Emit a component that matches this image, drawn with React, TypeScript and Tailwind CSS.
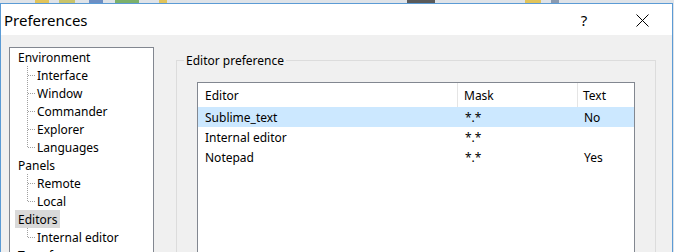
const tree = [
  { label: 'Environment', children: ['Interface', 'Window', 'Commander', 'Explorer', 'Languages'] },
  { label: 'Panels', children: ['Remote', 'Local'] },
  { label: 'Editors', selected: true, children: ['Internal editor'] },
  { label: 'Transfer', children: [] },
]

const editors = [
  { name: 'Sublime_text', mask: '*.*', text: 'No', selected: true },
  { name: 'Internal editor', mask: '*.*', text: '' },
  { name: 'Notepad', mask: '*.*', text: 'Yes' },
]

function Connector({ last }: { last: boolean }) {
  return (
    <svg width="10" height="18" className="shrink-0">
      <line x1="0.5" y1="0" x2="0.5" y2={last ? 9 : 18} stroke="#a0a0a0" strokeDasharray="1 1" />
      <line x1="1" y1="9.5" x2="8" y2="9.5" stroke="#a0a0a0" strokeDasharray="1 1" />
    </svg>
  )
}

export default function App() {
  return (
    <div className="w-[674px] h-[252px] overflow-hidden flex flex-col bg-[#dfe3e8] font-['Noto_Sans',sans-serif] text-[12px] text-black">
      {/* background app toolbar peeking above */}
      <div className="h-[3px] flex shrink-0">
        <span className="ml-[35px] w-[14px] bg-[#e2c45a]" />
        <span className="ml-[10px] w-[16px] bg-[#c9c46a]" />
        <span className="ml-[14px] w-[14px] bg-[#6c8fc4]" />
        <span className="ml-[12px] w-[24px] bg-[#7cb06a]" />
        <span className="ml-[20px] w-[8px] bg-[#e2c45a]" />
        <span className="ml-[240px] w-[28px] bg-[#5a5a5a]" />
        <span className="ml-[90px] w-[16px] bg-[#e2c45a]" />
        <span className="ml-[10px] w-[8px] bg-[#8a9ab0]" />
      </div>

      <div className="flex-1 min-h-0 w-[673px] flex flex-col border-t border-x border-[#5b9bd5] bg-[#f0f0f0]">
        {/* title bar */}
        <div className="h-[31px] shrink-0 bg-white flex items-center pt-[1px]">
          <span className="pl-[3px] text-[15px] leading-none">Preferences</span>
          <span className="ml-auto w-[8px] text-center text-[15px] leading-none">?</span>
          <svg width="13" height="13" className="ml-[48px] mr-[23px]" viewBox="0 0 13 13">
            <path d="M0.5 0.5 L12.5 12.5 M12.5 0.5 L0.5 12.5" stroke="#000" strokeWidth="1" fill="none" />
          </svg>
        </div>

        {/* body */}
        <div className="flex-1 min-h-0 flex">
          <div className="ml-[8px] mt-[12px] w-[145px] h-[220px] shrink-0 border border-[#828790] bg-white">
            {tree.map((node) => (
              <div key={node.label}>
                <div className="h-[18px] flex">
                  <span className={`ml-[5px] px-[3px] h-[18px] pt-[2px] leading-[16px] ${node.selected ? 'bg-[#d9d9d9]' : ''}`}>
                    {node.label}
                  </span>
                </div>
                {node.children.map((child, i) => (
                  <div key={child} className="h-[18px] flex pl-[17px]">
                    <Connector last={i === node.children.length - 1} />
                    <span className="pt-[2px] leading-[16px]">{child}</span>
                  </div>
                ))}
              </div>
            ))}
          </div>

          <fieldset className="ml-[22px] mt-[17px] w-[480px] h-[240px] shrink-0 border border-[#dcdcdc]">
            <legend className="ml-[7px] px-[2px] leading-[16px] pt-[1px]">Editor preference</legend>
            <div className="ml-[20px] mt-[13px] w-[438px] h-[200px] border border-[#828790] bg-white">
              <div className="h-[24px] grid grid-cols-[260px_120px_1fr]">
                <div className="pl-[7px] pt-[2px] flex items-center border-r border-[#e5e5e5]">Editor</div>
                <div className="pl-[6px] pt-[2px] flex items-center border-r border-[#e5e5e5]">Mask</div>
                <div className="pl-[5px] pt-[2px] flex items-center">Text</div>
              </div>
              {editors.map((e) => (
                <div
                  key={e.name}
                  className={`h-[20px] grid grid-cols-[260px_120px_1fr] items-center pt-[1px] ${e.selected ? 'bg-[#cce8ff]' : ''}`}
                >
                  <span className="pl-[7px]">{e.name}</span>
                  <span className="pl-[7px]">{e.mask}</span>
                  <span className="pl-[6px]">{e.text}</span>
                </div>
              ))}
            </div>
          </fieldset>
        </div>
      </div>
    </div>
  )
}
